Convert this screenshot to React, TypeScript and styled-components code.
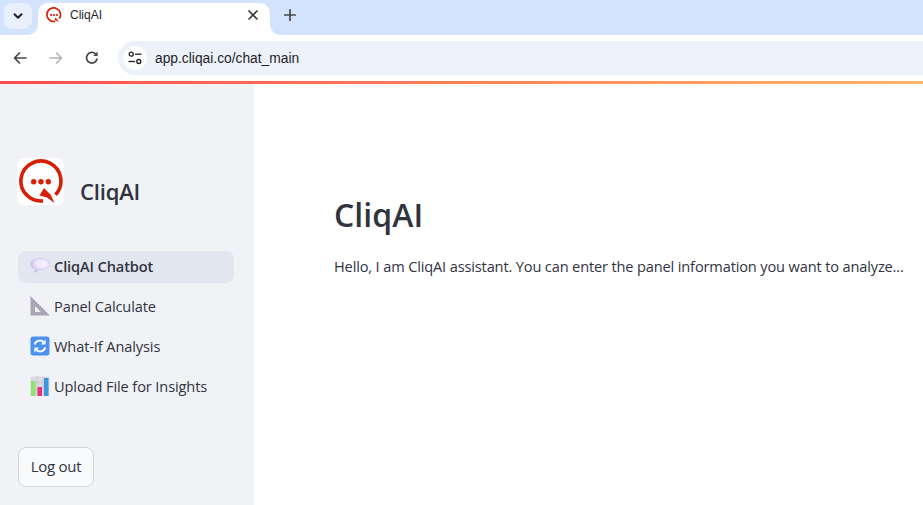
import React from "react";
import styled, { createGlobalStyle } from "styled-components";

const Global = createGlobalStyle`
  html, body { margin: 0; padding: 0; height: 100%; overflow: hidden; background: #fff; }
  #root { height: 100%; }
  * { box-sizing: border-box; }
`;

const Page = styled.div`
  width: 923px; height: 505px; display: flex; flex-direction: column; overflow: hidden;
  font-family: "Open Sans", "Noto Sans", sans-serif; color: #31333f;
`;
const TabStrip = styled.div`
  height: 35px; flex: none; background: #d3e3fd; display: flex; align-items: flex-start;
  padding: 3px 0 0 4px;
`;
const TabSearch = styled.div`
  width: 28px; height: 26px; border-radius: 8px; background: #e9f0fd; display: flex;
  align-items: center; justify-content: center; margin-right: 6px;
`;
const Tab = styled.div`
  width: 232px; height: 32px; background: #fff; border-radius: 10px 10px 0 0; display: flex;
  align-items: center; padding: 0 9px 8px 8px; position: relative;
  &::before, &::after {
    content: ""; position: absolute; bottom: 0; width: 10px; height: 10px;
    background: radial-gradient(circle at var(--cx) 0, #d3e3fd 9.5px, #fff 10px);
  }
  &::before { left: -10px; --cx: 0; }
  &::after { right: -10px; --cx: 100%; }
`;
const TabTitle = styled.span`
  font: 12px "Liberation Sans", Arial, sans-serif; color: #1f1f1f; margin-left: 8px; flex: 1;
`;
const NewTab = styled.div`
  width: 28px; height: 24px; margin-left: 6px; display: flex; align-items: center; justify-content: center;
`;
const Toolbar = styled.div`
  height: 46px; flex: none; background: #fff; display: flex; align-items: center; padding: 0 0 0 6px;
`;
const NavIcon = styled.div`
  width: 28px; height: 28px; margin-right: 8px; display: flex; align-items: center; justify-content: center;
`;
const Omnibox = styled.div`
  flex: 1; height: 34px; margin-left: 4px; background: #ecf1fa; border-radius: 17px 0 0 17px;
  display: flex; align-items: center; padding-left: 5px;
`;
const SiteChip = styled.div`
  width: 24px; height: 24px; border-radius: 50%; background: #fff; display: flex;
  align-items: center; justify-content: center; margin-right: 8px;
`;
const Url = styled.span`
  font: 13.8px "Liberation Sans", Arial, sans-serif; color: #1f1f1f;
`;
const Accent = styled.div`
  height: 3px; flex: none;
  background: linear-gradient(90deg, #ff4b4b, #ffa665 85%, #ffb36c);
`;
const Body = styled.div`
  flex: 1; display: flex; min-height: 0;
`;
const Sidebar = styled.aside`
  width: 254px; flex: none; background: #f0f2f6; display: flex; flex-direction: column;
  padding: 74px 20px 18px 18px;
`;
const Brand = styled.div`
  display: flex; align-items: flex-end; height: 47px; margin-left: -1px;
`;
const LogoBox = styled.div`
  width: 47px; height: 47px; background: #fff; border-radius: 7px; flex: none;
`;
const BrandName = styled.div`
  font-size: 22px; font-weight: 600; margin-left: 16px; line-height: 30px; position: relative; top: 1px;
  letter-spacing: -0.17px;
`;
const Nav = styled.nav`
  display: flex; flex-direction: column; gap: 8px; margin-top: 46px;
`;
const NavRow = styled.div<{ $active?: boolean }>`
  height: 32px; border-radius: 8px; display: flex; align-items: center; padding: 0 0 2px 12px;
  background: ${(p) => (p.$active ? "#e2e6ee" : "transparent")};
  font-size: 14.6px; font-weight: ${(p) => (p.$active ? 600 : 400)};
  letter-spacing: -0.115px; white-space: nowrap;
`;
const NavEmoji = styled.span`
  width: 20px; height: 20px; flex: none; margin-right: 4px; display: flex;
`;
const LogoutButton = styled.button`
  margin-top: auto; width: 76px; height: 40px; border: 1px solid #d5d6da; border-radius: 8px;
  background: #f9fafc; color: #31333f; font: 400 15px "Open Sans", sans-serif; padding: 0 0 2px;
  letter-spacing: -0.3px;
`;
const Main = styled.main`
  flex: 1; padding: 108px 0 0 80px; min-width: 0;
`;
const Title = styled.h1`
  margin: 0; font-size: 32px; font-weight: 600; line-height: 46px; letter-spacing: 0.05px;
`;
const Lead = styled.p`
  margin: 16px 0 0; font-size: 14.6px; line-height: 24px; white-space: nowrap; letter-spacing: -0.15px;
`;

const Logo = () => (
  <svg width="47" height="47" viewBox="0 0 47 47">
    <path d="M26 42.9A20 20 0 1 1 38.5 36.7" fill="none" stroke="#d81e05" strokeWidth="3.6" />
    <path d="M27 30L22.5 37.5L30 39.5L37.5 45L33.5 36.5Z" fill="#d81e05" />
    <circle cx="16.7" cy="23.7" r="2.7" fill="#d81e05" />
    <circle cx="24" cy="23.7" r="2.7" fill="#d81e05" />
    <circle cx="31.3" cy="23.7" r="2.7" fill="#d81e05" />
  </svg>
);
const Favicon = () => (
  <svg width="16" height="16" viewBox="0 0 47 47">
    <path d="M27 42A20 20 0 1 1 39 34" fill="none" stroke="#d81e05" strokeWidth="5" />
    <path d="M25 38 L28 31 L38 44 Z" fill="#d81e05" />
    <circle cx="15" cy="23.5" r="3.3" fill="#d81e05" />
    <circle cx="23.5" cy="23.5" r="3.3" fill="#d81e05" />
    <circle cx="32" cy="23.5" r="3.3" fill="#d81e05" />
  </svg>
);
const Stroke = { fill: "none", strokeWidth: 1.7, strokeLinecap: "round" as const, strokeLinejoin: "round" as const };

const Speech = () => (
  <svg width="20" height="20" viewBox="0 0 20 20">
    <defs>
      <radialGradient id="sp" cx="0.62" cy="0.38" r="0.62">
        <stop offset="0" stopColor="#f6f2fd" />
        <stop offset="0.65" stopColor="#eae2f9" />
        <stop offset="1" stopColor="#c8b4ee" />
      </radialGradient>
    </defs>
    <path d="M10.5 2.4C15.6 2.4 19.6 4.8 19.6 8.1S15.6 13.8 10.5 13.8C9.9 13.8 9.2 13.8 8.6 13.7C7.4 15.3 5.8 16.2 4 16.2C5 15.2 5.5 14 5.4 12.9C2.6 11.9 .5 10.2 .5 8.1C.5 4.8 5.4 2.4 10.5 2.4Z" fill="url(#sp)" stroke="#cdbcf0" strokeWidth=".6" />
  </svg>
);
const Triangle = () => (
  <svg width="20" height="20" viewBox="0 0 20 20">
    <path d="M.5 .5L19.5 19.5H.5Z" fill="#aaa6b2" />
    <path d="M.5 .5L19.5 19.5" stroke="#9a7fe0" strokeWidth="1" strokeDasharray="1.5 1.2" fill="none" />
    <path d="M5 10L11 16H5Z" fill="#f0f2f6" />
  </svg>
);
const Refresh = () => (
  <svg width="20" height="20" viewBox="0 0 20 20">
    <rect x=".5" y=".5" width="19" height="19" rx="2.5" fill="#4c90f0" />
    <g fill="none" stroke="#eef5ff" strokeWidth="2">
      <path d="M4.6 8.6A5.5 5.5 0 0 1 14 6.5" />
      <path d="M15.4 11.4A5.5 5.5 0 0 1 6 13.5" />
    </g>
    <path d="M15.6 3.6V8.4H10.8Z" fill="#eef5ff" />
    <path d="M4.4 16.4V11.6H9.2Z" fill="#eef5ff" />
  </svg>
);
const Chart = () => (
  <svg width="20" height="20" viewBox="0 0 20 20">
    <rect x=".5" y=".5" width="19" height="19" rx="1.5" fill="#dcdbe4" />
    <path d="M7 .5V19.5M13.3 .5V19.5M.5 6.5H19.5M.5 13H19.5" stroke="#c4c3cf" strokeWidth=".8" />
    <rect x="1" y="5" width="4.5" height="15" fill="#8fe46b" />
    <rect x="7.5" y="11" width="4.5" height="9" fill="#e6336f" />
    <rect x="14" y="2" width="4.5" height="18" fill="#3a97dd" />
  </svg>
);

const items = [
  { label: "CliqAI Chatbot", Icon: Speech, active: true },
  { label: "Panel Calculate", Icon: Triangle },
  { label: "What-If Analysis", Icon: Refresh },
  { label: "Upload File for Insights", Icon: Chart },
];

export default function App() {
  return (
    <Page>
      <Global />
      <TabStrip>
        <TabSearch>
          <svg width="12" height="12" viewBox="0 0 12 12"><path d="M2.5 4.2L6 7.7L9.5 4.2" stroke="#1f1f1f" {...Stroke} strokeWidth={2} /></svg>
        </TabSearch>
        <Tab>
          <Favicon />
          <TabTitle>CliqAI</TabTitle>
          <svg width="16" height="16" viewBox="0 0 16 16"><path d="M4 4L12 12M12 4L4 12" stroke="#3a3a3a" {...Stroke} /></svg>
        </Tab>
        <NewTab>
          <svg width="16" height="16" viewBox="0 0 16 16"><path d="M8 2.8V13.2M2.8 8H13.2" stroke="#474747" {...Stroke} /></svg>
        </NewTab>
      </TabStrip>
      <Toolbar>
        <NavIcon>
          <svg width="16" height="16" viewBox="0 0 16 16"><path d="M14 8H2.5M7.5 3L2.5 8L7.5 13" stroke="#474747" {...Stroke} /></svg>
        </NavIcon>
        <NavIcon>
          <svg width="16" height="16" viewBox="0 0 16 16"><path d="M2 8H13.5M8.5 3L13.5 8L8.5 13" stroke="#b2b4b8" {...Stroke} /></svg>
        </NavIcon>
        <NavIcon>
          <svg width="16" height="16" viewBox="0 0 16 16"><path d="M13 9A5.3 5.3 0 1 1 11.6 4" stroke="#474747" {...Stroke} /><path d="M13.6 1.6V6H9.2Z" fill="#474747" /></svg>
        </NavIcon>
        <Omnibox>
          <SiteChip>
            <svg width="16" height="16" viewBox="0 0 16 16" fill="none" stroke="#1f1f1f" strokeWidth="1.3">
              <circle cx="4.2" cy="4.2" r="2" /><path d="M8 4.2H14.5" /><circle cx="11.8" cy="11.5" r="2" /><path d="M1.5 11.5H8" />
            </svg>
          </SiteChip>
          <Url>app.cliqai.co/chat_main</Url>
        </Omnibox>
      </Toolbar>
      <Accent />
      <Body>
        <Sidebar>
          <Brand>
            <LogoBox><Logo /></LogoBox>
            <BrandName>CliqAI</BrandName>
          </Brand>
          <Nav>
            {items.map(({ label, Icon, active }) => (
              <NavRow key={label} $active={active}>
                <NavEmoji><Icon /></NavEmoji>
                {label}
              </NavRow>
            ))}
          </Nav>
          <LogoutButton>Log out</LogoutButton>
        </Sidebar>
        <Main>
          <Title>CliqAI</Title>
          <Lead>Hello, I am CliqAI assistant. You can enter the panel information you want to analyze...</Lead>
        </Main>
      </Body>
    </Page>
  );
}
